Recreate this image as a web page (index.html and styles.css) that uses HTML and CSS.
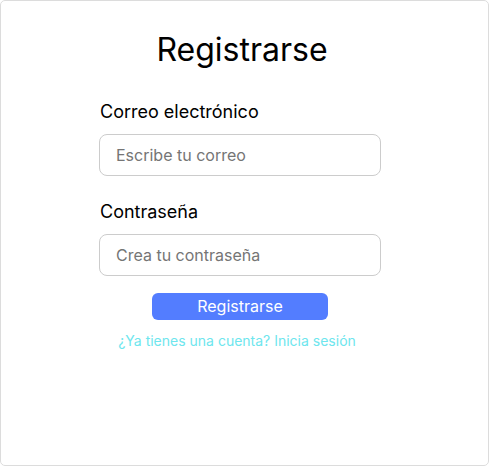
FILE: index.html
```html
<!DOCTYPE html>
<html lang="es">
<head>
<meta charset="utf-8">
<title>Registrarse</title>
<link rel="stylesheet" href="styles.css">
</head>
<body>
<main class="card">
  <form class="form">
    <h1 class="title">Registrarse</h1>
    <div class="field">
      <label class="label" for="email">Correo electrónico</label>
      <input class="input" id="email" type="email" placeholder="Escribe tu correo">
    </div>
    <div class="field">
      <label class="label" for="password">Contraseña</label>
      <input class="input" id="password" type="password" placeholder="Crea tu contraseña">
    </div>
    <button class="button" type="button">Registrarse</button>
    <a class="link" href="#">¿Ya tienes una cuenta? Inicia sesión</a>
  </form>
</main>
</body>
</html>
```

FILE: styles.css
```css
* { box-sizing: border-box; }
html, body { margin: 0; padding: 0; background: #fff; }
body {
  font-family: Inter, "Noto Sans", sans-serif;
  color: #000;
  width: 489px;
  height: 466px;
}
.card {
  width: 489px;
  height: 466px;
  border: 1px solid #dcdcdc;
  border-radius: 5px;
  padding: 29px 107px 0 98px;
}
.form {
  width: 282px;
  display: flex;
  flex-direction: column;
}
.title {
  margin: 0;
  font-size: 32px;
  line-height: 40px;
  font-weight: 400;
  text-align: center;
  padding-left: 4px;
}
.field {
  display: flex;
  flex-direction: column;
  gap: 10px;
  margin-top: 30px;
}
.field + .field { margin-top: 24px; }
.label {
  font-size: 18px;
  line-height: 24px;
  padding-left: 1px;
}
.input {
  height: 42px;
  width: 282px;
  border: 1px solid #cccccc;
  border-radius: 8px;
  padding: 0 16px;
  font-family: inherit;
  font-size: 16px;
  color: #333;
  outline: none;
}
.input::placeholder { color: #757575; }
.button {
  align-self: center;
  margin-top: 17px;
  width: 176px;
  height: 27px;
  border: 0;
  border-radius: 6px;
  background: #537dff;
  color: #fff;
  font-family: inherit;
  font-size: 16px;
  line-height: 27px;
  padding: 0;
}
.link {
  align-self: center;
  margin-top: 11px;
  margin-right: 6px;
  font-size: 14px;
  line-height: 20px;
  color: #6ee6ee;
  text-decoration: none;
}
```
